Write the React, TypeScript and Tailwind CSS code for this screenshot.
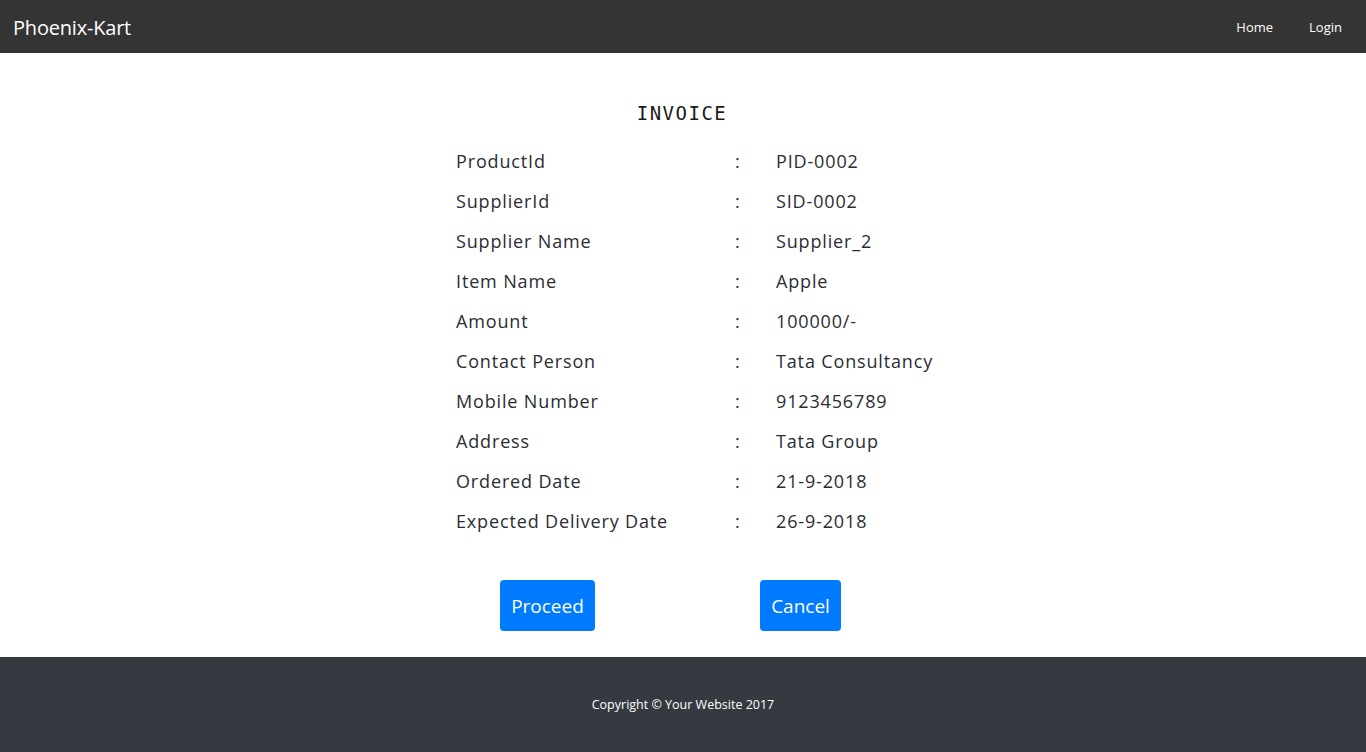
import React from "react"

const rows: [string, string][] = [
  ["ProductId", "PID-0002"],
  ["SupplierId", "SID-0002"],
  ["Supplier Name", "Supplier_2"],
  ["Item Name", "Apple"],
  ["Amount", "100000/-"],
  ["Contact Person", "Tata Consultancy"],
  ["Mobile Number", "9123456789"],
  ["Address", "Tata Group"],
  ["Ordered Date", "21-9-2018"],
  ["Expected Delivery Date", "26-9-2018"],
]

export default function App() {
  return (
    <div className="min-h-[752px] flex flex-col bg-white font-['Open_Sans',sans-serif]">

      {/* navbar */}
      <nav className="h-[53px] bg-[#343434] flex items-center justify-between pl-[13px] pr-6">
        <span className="text-[20px] text-white tracking-[-0.2px] pt-[2px]">Phoenix-Kart</span>
        <div className="flex items-center gap-[36px] text-[13px] text-white pt-[3px]">
          <span>Home</span>
          <span>Login</span>
        </div>
      </nav>

      {/* invoice */}
      <main className="flex-1 pt-[47px] pb-[26px]">
        <div className="w-[454px] mx-auto">
          <h1 className="text-center pr-[2px] text-[19px] leading-[26px] tracking-[1.5px] text-[#1a1a1a] font-['DejaVu_Sans_Mono',monospace]">
            INVOICE
          </h1>

          <div className="mt-[15px] grid grid-cols-[279px_40px_max-content] text-[18px] tracking-[0.85px] text-[#2a2d33] whitespace-nowrap">
            {rows.map(([label, value]) => (
              <React.Fragment key={label}>
                <div className="h-[40px] flex items-center">{label}</div>
                <div className="h-[40px] flex items-center">:</div>
                <div className="h-[40px] flex items-center pl-[1px]">{value}</div>
              </React.Fragment>
            ))}
          </div>

          <div className="mt-[39px] pl-[44px] flex gap-[165px]">
            <button className="h-[51px] w-[95px] pt-[2px] rounded-[4px] bg-[#007bff] text-white text-[19px]">
              Proceed
            </button>
            <button className="h-[51px] w-[81px] pt-[2px] rounded-[4px] bg-[#007bff] text-white text-[19px]">
              Cancel
            </button>
          </div>
        </div>
      </main>

      {/* footer */}
      <footer className="h-[95px] bg-[#343a40] flex items-center justify-center pt-[2px]">
        <p className="text-[12.5px] text-white">Copyright © Your Website 2017</p>
      </footer>

    </div>
  )
}
